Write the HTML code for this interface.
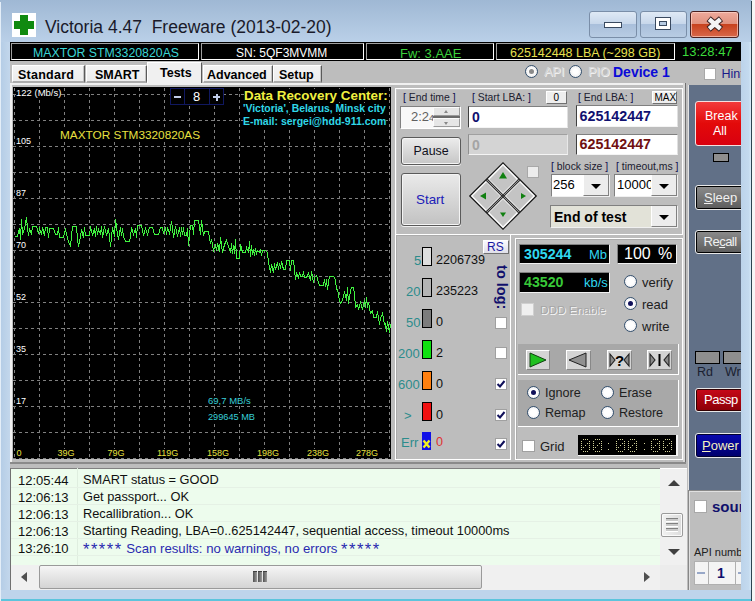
<!DOCTYPE html>
<html><head><meta charset="utf-8">
<style>
*{margin:0;padding:0;box-sizing:border-box}
html,body{width:755px;height:601px;overflow:hidden}
body{position:relative;font-family:"Liberation Sans",sans-serif;background:#bcd3ea;color:#000}
.a{position:absolute}
.t{position:absolute;line-height:1;white-space:nowrap}
.b{font-weight:bold}
.rad{width:13px;height:13px;border-radius:50%;background:radial-gradient(circle at 50% 50%,#fff 40%,#e4e4ea 100%);border:1.5px solid #34506e}
.k{background:#000}
</style></head><body>
<!-- window frame -->
<div class="a" style="left:0;top:0;width:751px;height:42px;background:linear-gradient(#9fb8d4,#bad0e8)"></div>
<!-- icon -->
<div class="a" style="left:12px;top:13px;width:24px;height:24px;background:#fff"></div>
<div class="a" style="left:20px;top:15px;width:8px;height:20px;background:#108a10"></div>
<div class="a" style="left:14px;top:21px;width:20px;height:8px;background:#108a10"></div>
<!-- title -->
<div class="t" id="title" style="left:45px;top:18.5px;font-size:17.5px;color:#1a1a2a">Victoria 4.47&nbsp;&nbsp;Freeware (2013-02-20)</div>
<!-- caption buttons -->
<div class="a" style="left:589px;top:11px;width:48px;height:27px;border:1px solid #7a8ea8;border-radius:3px;background:linear-gradient(#dfe9f5 0,#c6d6ea 50%,#a9bfdb 50%,#b8cce3 100%)"></div>
<div class="a" style="left:604px;top:22px;width:18px;height:6px;background:#fff;border:1px solid #3a4a60"></div>
<div class="a" style="left:640px;top:11px;width:47px;height:27px;border:1px solid #7a8ea8;border-radius:3px;background:linear-gradient(#dfe9f5 0,#c6d6ea 50%,#a9bfdb 50%,#b8cce3 100%)"></div>
<div class="a" style="left:655px;top:17px;width:16px;height:13px;background:#fff;border:1px solid #3a4a60"></div>
<div class="a" style="left:659px;top:21px;width:8px;height:5px;background:#b8cce3;border:1px solid #3a4a60"></div>
<div class="a" style="left:690px;top:11px;width:49px;height:27px;border:1px solid #4a2020;border-radius:3px;background:linear-gradient(#eeaa9c 0,#e0907c 50%,#c8421e 50%,#d8684a 100%);box-shadow:inset 0 0 0 1px rgba(255,220,210,0.6)"></div>
<svg class="a" style="left:704px;top:14px" width="22" height="20" viewBox="0 0 22 20"><path d="M4.6 4.8 L17 15.2 M17 4.8 L4.6 15.2" stroke="#3a2020" stroke-width="6.4" fill="none"/><path d="M5.2 5.3 L16.4 14.7 M16.4 5.3 L5.2 14.7" stroke="#f4f4f4" stroke-width="4.4" fill="none"/></svg>

<!-- client -->
<div class="a" style="left:10px;top:42px;width:731px;height:548px;background:#bdbdbd"></div>
<!-- status bar -->
<div class="a" style="left:10px;top:42px;width:731px;height:19px;background:#000"></div>
<div class="a" style="left:11px;top:43px;width:188px;height:17px;border-top:1px solid #a0a0a0;border-left:1px solid #a0a0a0;border-right:1px solid #fff;border-bottom:1px solid #fff"></div>
<div class="a" style="left:201px;top:43px;width:163px;height:17px;border-top:1px solid #a0a0a0;border-left:1px solid #a0a0a0;border-right:1px solid #fff;border-bottom:1px solid #fff"></div>
<div class="a" style="left:366px;top:43px;width:128px;height:17px;border-top:1px solid #a0a0a0;border-left:1px solid #a0a0a0;border-right:1px solid #fff;border-bottom:1px solid #fff"></div>
<div class="a" style="left:496px;top:43px;width:179px;height:17px;border-top:1px solid #a0a0a0;border-left:1px solid #a0a0a0;border-right:1px solid #fff;border-bottom:1px solid #fff"></div>
<div class="t" id="st1" style="left:33px;top:47px;font-size:12.3px;color:#3cd6d6">MAXTOR STM3320820AS</div>
<div class="t" id="st2" style="left:236px;top:47px;font-size:12px;color:#fff">SN: 5QF3MVMM</div>
<div class="t" id="st3" style="left:400px;top:47px;font-size:13px;color:#3cd23c">Fw: 3.AAE</div>
<div class="t" id="st4" style="left:510px;top:47px;font-size:12.5px;color:#e8e050">625142448 LBA (~298 GB)</div>
<div class="t" id="st5" style="left:682px;top:45px;font-size:13px;color:#3cdc3c">13:28:47</div>

<!-- tabs -->
<div class="a" style="left:12px;top:65px;width:73px;height:18px;background:linear-gradient(#f4f4f4,#ececec);border-right:1px solid #5a5a5a;border-bottom:2px solid #acacac;border-left:1px solid #fff;border-top:1px solid #fff;box-shadow:inset -1px 0 0 #c4c4c4"></div>
<div class="a" style="left:86px;top:65px;width:61px;height:18px;background:linear-gradient(#f4f4f4,#ececec);border-right:1px solid #5a5a5a;border-bottom:2px solid #acacac;border-left:1px solid #fff;border-top:1px solid #fff;box-shadow:inset -1px 0 0 #c4c4c4"></div>
<div class="a" style="left:147px;top:62px;width:55px;height:23px;background:#f0f0f0;border-right:1px solid #5a5a5a;border-left:1px solid #fff;border-top:1px solid #fff"></div>
<div class="a" style="left:203px;top:65px;width:70px;height:18px;background:linear-gradient(#f4f4f4,#ececec);border-right:1px solid #5a5a5a;border-bottom:2px solid #acacac;border-left:1px solid #fff;border-top:1px solid #fff;box-shadow:inset -1px 0 0 #c4c4c4"></div>
<div class="a" style="left:273px;top:65px;width:49px;height:18px;background:linear-gradient(#f4f4f4,#ececec);border-right:1px solid #5a5a5a;border-bottom:2px solid #acacac;border-left:1px solid #fff;border-top:1px solid #fff;box-shadow:inset -1px 0 0 #c4c4c4"></div>
<div class="t b" id="tab1" style="left:18px;top:69px;font-size:12.5px;letter-spacing:0.25px">Standard</div>
<div class="t b" id="tab2" style="left:95px;top:69px;font-size:12.5px">SMART</div>
<div class="t b" id="tab3" style="left:160px;top:67px;font-size:12.5px">Tests</div>
<div class="t b" id="tab4" style="left:207px;top:69px;font-size:12.5px">Advanced</div>
<div class="t b" id="tab5" style="left:279px;top:69px;font-size:12.5px">Setup</div>

<!-- tab page border -->
<div class="a" style="left:10px;top:83px;width:675px;height:2px;background:#f0f0f0"></div>
<div class="a" style="left:10px;top:83px;width:2px;height:380px;background:#f0f0f0"></div>
<div class="a" style="left:683px;top:83px;width:3px;height:381px;background:#d8d8d8;border-right:1px solid #707070"></div>
<div class="a" style="left:10px;top:462px;width:677px;height:2px;background:#8a8a8a"></div>

<!-- chart -->
<div class="a" style="left:13px;top:87px;width:378px;height:372px;background:#000"></div>
<svg class="a" style="left:0;top:0" width="755" height="601">
<g stroke="#808080" stroke-width="1" stroke-dasharray="3 3" shape-rendering="crispEdges">
<line x1="14.5" y1="88" x2="14.5" y2="459"/>
<line x1="39.5" y1="88" x2="39.5" y2="459"/>
<line x1="64.5" y1="88" x2="64.5" y2="459"/>
<line x1="89.5" y1="88" x2="89.5" y2="459"/>
<line x1="114.5" y1="88" x2="114.5" y2="459"/>
<line x1="139.5" y1="88" x2="139.5" y2="459"/>
<line x1="164.5" y1="88" x2="164.5" y2="459"/>
<line x1="189.5" y1="88" x2="189.5" y2="459"/>
<line x1="214.5" y1="88" x2="214.5" y2="459"/>
<line x1="239.5" y1="88" x2="239.5" y2="459"/>
<line x1="264.5" y1="88" x2="264.5" y2="459"/>
<line x1="289.5" y1="88" x2="289.5" y2="459"/>
<line x1="314.5" y1="88" x2="314.5" y2="459"/>
<line x1="339.5" y1="88" x2="339.5" y2="459"/>
<line x1="364.5" y1="88" x2="364.5" y2="459"/>
<line x1="389.5" y1="88" x2="389.5" y2="459"/>
<line x1="13" y1="94.5" x2="391" y2="94.5"/>
<line x1="13" y1="120.5" x2="391" y2="120.5"/>
<line x1="13" y1="146.5" x2="391" y2="146.5"/>
<line x1="13" y1="172.5" x2="391" y2="172.5"/>
<line x1="13" y1="198.5" x2="391" y2="198.5"/>
<line x1="13" y1="224.5" x2="391" y2="224.5"/>
<line x1="13" y1="250.5" x2="391" y2="250.5"/>
<line x1="13" y1="276.5" x2="391" y2="276.5"/>
<line x1="13" y1="302.5" x2="391" y2="302.5"/>
<line x1="13" y1="328.5" x2="391" y2="328.5"/>
<line x1="13" y1="354.5" x2="391" y2="354.5"/>
<line x1="13" y1="380.5" x2="391" y2="380.5"/>
<line x1="13" y1="406.5" x2="391" y2="406.5"/>
<line x1="13" y1="432.5" x2="391" y2="432.5"/>
<line x1="13" y1="458.5" x2="391" y2="458.5"/>
</g>
<polyline fill="none" stroke="#40f440" stroke-width="1" shape-rendering="crispEdges" points="14.5,236.5 17.5,236.5 19.5,228.5 20.5,239.5 21.5,219.5 22.5,234.5 24.5,228.5 26.5,217.5 27.5,228.5 28.5,235.5 29.5,228.5 31.5,234.5 32.5,226.5 36.5,226.5 38.5,233.5 39.5,228.5 41.5,234.5 42.5,227.5 44.5,235.5 45.5,227.5 47.5,227.5 48.5,237.5 49.5,228.5 53.5,228.5 55.5,234.5 57.5,234.5 58.5,227.5 59.5,237.5 63.5,237.5 65.5,228.5 66.5,234.5 68.5,241.5 70.5,246.5 72.5,226.5 76.5,226.5 77.5,239.5 78.5,246.5 80.5,236.5 81.5,229.5 83.5,237.5 84.5,227.5 85.5,235.5 89.5,235.5 90.5,226.5 92.5,235.5 94.5,228.5 95.5,236.5 96.5,226.5 97.5,234.5 98.5,229.5 100.5,234.5 101.5,226.5 102.5,237.5 104.5,226.5 106.5,235.5 108.5,228.5 110.5,246.5 112.5,227.5 114.5,236.5 115.5,219.5 117.5,234.5 118.5,239.5 119.5,233.5 120.5,227.5 121.5,235.5 122.5,228.5 123.5,236.5 125.5,241.5 129.5,241.5 130.5,237.5 131.5,227.5 133.5,234.5 135.5,228.5 136.5,237.5 137.5,225.5 141.5,225.5 143.5,235.5 145.5,228.5 147.5,234.5 149.5,227.5 152.5,227.5 154.5,234.5 158.5,234.5 160.5,227.5 162.5,227.5 163.5,233.5 165.5,227.5 166.5,234.5 167.5,227.5 169.5,233.5 170.5,228.5 171.5,221.5 172.5,228.5 173.5,237.5 175.5,226.5 177.5,236.5 179.5,227.5 180.5,236.5 181.5,227.5 182.5,234.5 183.5,227.5 184.5,235.5 186.5,235.5 187.5,228.5 188.5,245.5 190.5,225.5 192.5,225.5 193.5,234.5 194.5,220.5 198.5,220.5 200.5,234.5 201.5,220.5 203.5,235.5 204.5,231.5 208.5,231.5 210.5,243.5 211.5,239.5 213.5,250.5 215.5,245.5 216.5,250.5 217.5,243.5 219.5,251.5 220.5,237.5 222.5,252.5 224.5,244.5 226.5,240.5 228.5,246.5 230.5,252.5 231.5,243.5 232.5,253.5 233.5,245.5 234.5,253.5 235.5,239.5 236.5,258.5 239.5,258.5 240.5,244.5 242.5,252.5 245.5,252.5 246.5,247.5 248.5,252.5 249.5,241.5 250.5,256.5 251.5,245.5 252.5,254.5 253.5,249.5 254.5,255.5 255.5,248.5 256.5,253.5 257.5,250.5 259.5,252.5 260.5,250.5 261.5,255.5 262.5,250.5 265.5,250.5 267.5,252.5 268.5,262.5 270.5,272.5 271.5,264.5 273.5,272.5 274.5,263.5 275.5,269.5 277.5,262.5 278.5,269.5 279.5,263.5 280.5,268.5 281.5,261.5 283.5,269.5 285.5,269.5 286.5,260.5 289.5,260.5 290.5,270.5 291.5,260.5 293.5,260.5 295.5,279.5 296.5,273.5 298.5,277.5 299.5,272.5 300.5,276.5 302.5,276.5 303.5,271.5 304.5,277.5 306.5,277.5 308.5,273.5 310.5,280.5 311.5,271.5 313.5,282.5 314.5,277.5 316.5,275.5 318.5,282.5 319.5,285.5 323.5,285.5 324.5,279.5 325.5,286.5 326.5,279.5 327.5,289.5 328.5,282.5 329.5,276.5 333.5,276.5 335.5,279.5 336.5,289.5 337.5,289.5 339.5,300.5 340.5,303.5 342.5,300.5 344.5,291.5 346.5,300.5 347.5,287.5 348.5,303.5 350.5,290.5 351.5,287.5 353.5,287.5 354.5,294.5 355.5,307.5 357.5,304.5 358.5,309.5 360.5,302.5 362.5,309.5 364.5,300.5 365.5,307.5 366.5,297.5 367.5,307.5 368.5,302.5 370.5,313.5 372.5,310.5 373.5,317.5 376.5,317.5 377.5,311.5 378.5,317.5 379.5,324.5 380.5,318.5 382.5,313.5 384.5,324.5 385.5,323.5 386.5,331.5 387.5,321.5 389.5,332.5 390.5,324.5"/>
</svg>
<div class="t k" id="c122" style="left:16px;top:88px;font-size:9.5px;color:#fff">122 (Mb/s)</div>
<div class="t k" id="c105" style="left:16px;top:137px;font-size:9px;color:#fff">105</div>
<div class="t k" id="c87" style="left:16px;top:189px;font-size:9px;color:#fff">87</div>
<div class="t k" id="c70" style="left:16px;top:241px;font-size:9px;color:#fff">70</div>
<div class="t k" id="c52" style="left:16px;top:293px;font-size:9px;color:#fff">52</div>
<div class="t k" id="c35" style="left:16px;top:345px;font-size:9px;color:#fff">35</div>
<div class="t k" id="c17" style="left:16px;top:397px;font-size:9px;color:#fff">17</div>
<div class="t k" id="x0" style="left:16.5px;top:449px;font-size:9px;color:#e8e040">0</div>
<div class="t k" id="x39" style="left:57.5px;top:449px;font-size:9px;color:#e8e040">39G</div>
<div class="t k" id="x79" style="left:107.5px;top:449px;font-size:9px;color:#e8e040">79G</div>
<div class="t k" id="x119" style="left:157px;top:449px;font-size:9px;color:#e8e040">119G</div>
<div class="t k" id="x158" style="left:207px;top:449px;font-size:9px;color:#e8e040">158G</div>
<div class="t k" id="x198" style="left:257px;top:449px;font-size:9px;color:#e8e040">198G</div>
<div class="t k" id="x238" style="left:307px;top:449px;font-size:9px;color:#e8e040">238G</div>
<div class="t k" id="x278" style="left:356px;top:449px;font-size:9px;color:#e8e040">278G</div>
<div class="t k" id="cmax" style="left:60px;top:130px;font-size:11.8px;color:#e8e040">MAXTOR STM3320820AS</div>
<div class="t k" id="cspd" style="left:208px;top:396px;font-size:9.5px;color:#38d0d8">69,7 MB/s</div>
<div class="t k" id="cmb" style="left:208px;top:413px;font-size:9.2px;color:#38d0d8">299645 MB</div>
<div class="t b k" id="drc" style="left:244px;top:89px;font-size:13.4px;color:#f0f040">Data Recovery Center:</div>
<div class="t b k" id="drc2" style="left:243px;top:104px;font-size:10.4px;color:#30d8e8">'Victoria', Belarus, Minsk city</div>
<div class="t b k" id="drc3" style="left:243px;top:116px;font-size:10.5px;color:#30d8e8">E-mail: sergei@hdd-911.com</div>
<!-- spinner -->
<div class="a" style="left:170px;top:88px;width:54px;height:17px;background:#000;border:1px solid #101860"></div>
<div class="a" style="left:184px;top:88px;width:1px;height:17px;background:#101860"></div>
<div class="a" style="left:209px;top:88px;width:1px;height:17px;background:#101860"></div>
<div class="a" style="left:174px;top:96px;width:7px;height:2px;background:#c0cce8"></div>
<div class="a" style="left:213px;top:96px;width:7px;height:2px;background:#c0cce8"></div>
<div class="a" style="left:215.5px;top:93.5px;width:2px;height:7px;background:#c0cce8"></div>
<div class="t" id="spin8" style="left:193px;top:90px;font-size:13px;color:#fff">8</div>

<!-- ===== API/PIO row ===== -->
<div class="a rad" style="left:525px;top:65px;background:radial-gradient(#fff 30%,#e4e4e4)"></div>
<div class="a" style="left:529px;top:69px;width:5px;height:5px;border-radius:50%;background:#8a8a8a"></div>
<div class="t" id="api" style="left:544px;top:66px;font-size:12.5px;color:#d8d8d8;text-shadow:1px 1px 0 #f0f0f0">API</div>
<div class="a rad" style="left:569px;top:65px;background:radial-gradient(#fff 30%,#e4e4e4)"></div>
<div class="t" id="pio" style="left:588px;top:66px;font-size:12.5px;color:#d8d8d8;text-shadow:1px 1px 0 #f0f0f0">PIO</div>
<div class="t b" id="dev" style="left:613px;top:65px;font-size:14px;color:#0a0ad8">Device 1</div>
<div class="a" style="left:704px;top:68px;width:12px;height:12px;background:#fff;border:1px solid #a8a8a8"></div>
<div class="t" id="hint" style="left:721.5px;top:67.5px;font-size:12.5px;color:#1a1a8a">Hint</div>

<!-- ===== sidebar ===== -->
<div class="a" style="left:686px;top:85px;width:3px;height:405px;background:#bdbdbd;border-right:1px solid #e4e4e4"></div>
<div class="a" style="left:689px;top:85px;width:52px;height:405px;background:#617087"></div>
<div class="a" style="left:695px;top:101px;width:50px;height:45px;border:1px solid #f4e0e0;border-radius:3px;background:linear-gradient(#f23a3a,#e30a0a 50%,#d80010)"></div>
<div class="t" id="brk1" style="left:705px;top:110px;font-size:12.5px;color:#fff">Break</div>
<div class="t" id="brk2" style="left:713px;top:125px;font-size:12.5px;color:#fff">All</div>
<div class="a" style="left:713px;top:153px;width:16px;height:9px;background:#8e8e8e;border:1px solid #000"></div>
<div class="a" style="left:695px;top:185px;width:50px;height:25px;border:1px solid #e8e8e8;border-radius:3px;background:linear-gradient(#8c8c8c,#5c5c5c);box-shadow:inset 0 0 0 1px #000"></div>
<div class="t" id="slp" style="left:704px;top:191px;font-size:13px;color:#f0f0f0"><u>S</u>leep</div>
<div class="a" style="left:695px;top:230px;width:50px;height:24px;border:1px solid #e8e8e8;border-radius:3px;background:linear-gradient(#8c8c8c,#5c5c5c);box-shadow:inset 0 0 0 1px #000"></div>
<div class="t" id="rcl" style="left:703.5px;top:235px;font-size:13px;color:#f0f0f0;letter-spacing:-0.5px">Re<u>c</u>all</div>
<div class="a" style="left:695px;top:351px;width:25px;height:13px;background:#8e8e8e;border:1px solid #000"></div>
<div class="a" style="left:723px;top:351px;width:25px;height:13px;background:#8e8e8e;border:1px solid #000"></div>
<div class="t" id="rd" style="left:697px;top:366px;font-size:12.5px;color:#1a2030">Rd</div>
<div class="t" id="wr" style="left:725px;top:366px;font-size:12.5px;color:#1a2030">Wr</div>
<div class="a" style="left:695px;top:388px;width:50px;height:24px;border:1px solid #e8e8e8;border-radius:3px;background:linear-gradient(#c80818,#8a0008);box-shadow:inset 0 0 0 1px #300"></div>
<div class="t" id="psp" style="left:704px;top:393px;font-size:13px;color:#fff;letter-spacing:-0.5px">Passp</div>
<div class="a" style="left:695px;top:433px;width:50px;height:25px;border:1px solid #e8e8e8;border-radius:3px;background:linear-gradient(#0808b0,#00006a);box-shadow:inset 0 0 0 1px #000030"></div>
<div class="t" id="pwr" style="left:702px;top:439px;font-size:13px;color:#f4f0c0"><u>P</u>ower</div>
<!-- lower sidebar panel -->
<div class="a" style="left:688px;top:490px;width:53px;height:101px;background:#bebebe;border-top:1px solid #888;border-left:1px solid #888;border-bottom:1px solid #f4f4f4"></div>
<div class="a" style="left:689px;top:491px;width:52px;height:99px;border-top:1px solid #e0e0e0;border-left:1px solid #e0e0e0"></div>
<div class="a" style="left:694px;top:500px;width:13px;height:13px;background:#fff;border:1px solid #a8a8a8"></div>
<div class="t b" id="snd" style="left:712px;top:499px;font-size:15px;color:#10106c">sound</div>
<div class="t" id="apin" style="left:694px;top:547px;font-size:11px;color:#202020">API number</div>
<div class="a" style="left:694px;top:561px;width:60px;height:24px;background:#f4f4f4;border:1px solid #b0b0b0"></div>
<div class="a" style="left:708px;top:561px;width:1px;height:24px;background:#b0b0b0"></div>
<div class="a" style="left:735px;top:561px;width:1px;height:24px;background:#b0b0b0"></div>
<div class="a" style="left:697px;top:572px;width:8px;height:2px;background:#98a8c8"></div>
<div class="a" style="left:738px;top:572px;width:3px;height:2px;background:#98a8c8"></div>
<div class="t b" id="api1" style="left:717px;top:566px;font-size:14px;color:#10106c">1</div>

<!-- ===== log ===== -->
<div class="a" style="left:10px;top:468px;width:650px;height:97px;background:#edfced;border-top:1px solid #808080;border-left:1px solid #707070"></div>
<div class="a" style="left:77px;top:468px;width:1px;height:97px;background:#dfeedf"></div>
<div class="a" style="left:11px;top:487px;width:649px;height:1px;background:#e5f1e5"></div>
<div class="a" style="left:11px;top:504px;width:649px;height:1px;background:#e5f1e5"></div>
<div class="a" style="left:11px;top:521px;width:649px;height:1px;background:#e5f1e5"></div>
<div class="a" style="left:11px;top:538px;width:649px;height:1px;background:#e5f1e5"></div>
<div class="a" style="left:11px;top:555px;width:649px;height:1px;background:#e5f1e5"></div>
<div class="t" id="lt1" style="left:18px;top:474px;font-size:13px;color:#101010">12:05:44</div>
<div class="t" id="lt2" style="left:18px;top:491px;font-size:13px;color:#101010">12:06:13</div>
<div class="t" id="lt3" style="left:18px;top:508px;font-size:13px;color:#101010">12:06:13</div>
<div class="t" id="lt4" style="left:18px;top:525px;font-size:13px;color:#101010">12:06:13</div>
<div class="t" id="lt5" style="left:18px;top:542px;font-size:13px;color:#101010">13:26:10</div>
<div class="t" id="lm1" style="left:83px;top:474px;font-size:12.8px;color:#101010">SMART status = GOOD</div>
<div class="t" id="lm2" style="left:83px;top:491px;font-size:12.8px;color:#101010">Get passport... OK</div>
<div class="t" id="lm3" style="left:83px;top:508px;font-size:12.8px;color:#101010">Recallibration... OK</div>
<div class="t" id="lm4" style="left:83px;top:525px;font-size:12.8px;color:#101010">Starting Reading, LBA=0..625142447, sequential access, timeout 10000ms</div>
<div class="t" id="lm5" style="left:83px;top:542px;font-size:13.2px;color:#2a2ab0"><span style="letter-spacing:1.5px;font-size:16.5px;position:relative;top:2px;line-height:0">*****</span> Scan results: no warnings, no errors <span style="letter-spacing:1.5px;font-size:16.5px;position:relative;top:2px;line-height:0">*****</span></div>
<!-- vertical scrollbar -->
<div class="a" style="left:660px;top:468px;width:27px;height:97px;background:#f0f0f0;border-top:1px solid #fff"></div>
<div class="a" style="left:668px;top:480px;width:0;height:0;border-left:6px solid transparent;border-right:6px solid transparent;border-bottom:6px solid #404040"></div>
<div class="a" style="left:661px;top:513px;width:22px;height:24px;border:1px solid #9a9a9a;border-radius:2px;background:linear-gradient(90deg,#f2f2f2,#dcdcdc);box-shadow:inset 0 0 0 1px #fafafa"></div>
<div class="a" style="left:666px;top:518px;width:12px;height:4px;background:#c8c8c8;border-top:1px solid #808080;border-bottom:1px solid #fff"></div>
<div class="a" style="left:666px;top:523px;width:12px;height:4px;background:#c8c8c8;border-top:1px solid #808080;border-bottom:1px solid #fff"></div>
<div class="a" style="left:666px;top:528px;width:12px;height:4px;background:#c8c8c8;border-top:1px solid #808080;border-bottom:1px solid #fff"></div>
<div class="a" style="left:668px;top:549px;width:0;height:0;border-left:6px solid transparent;border-right:6px solid transparent;border-top:6px solid #404040"></div>
<!-- horizontal scrollbar -->
<div class="a" style="left:10px;top:565px;width:677px;height:26px;background:#f0f0f0;border-left:1px solid #707070"></div>
<div class="a" style="left:21px;top:572px;width:0;height:0;border-top:5.5px solid transparent;border-bottom:5.5px solid transparent;border-right:6px solid #505050"></div>
<div class="a" style="left:39px;top:565px;width:443px;height:24px;border:1px solid #9a9a9a;border-radius:2px;background:linear-gradient(#f6f6f6,#e8e8e8 40%,#d4d4d4)"></div>
<div class="a" style="left:253px;top:571px;width:4px;height:11px;background:linear-gradient(90deg,#505050,#9a9a9a);border-top:1px solid #404040"></div>
<div class="a" style="left:258px;top:571px;width:4px;height:11px;background:linear-gradient(90deg,#505050,#9a9a9a);border-top:1px solid #404040"></div>
<div class="a" style="left:263px;top:571px;width:4px;height:11px;background:linear-gradient(90deg,#505050,#9a9a9a);border-top:1px solid #404040"></div>
<div class="a" style="left:644px;top:572px;width:0;height:0;border-top:5.5px solid transparent;border-bottom:5.5px solid transparent;border-left:6px solid #505050"></div>
<div class="a" style="left:660px;top:565px;width:27px;height:26px;background:#ececec"></div>
<!-- ===== top-right panel ===== -->
<div class="a" style="left:395px;top:88px;width:288px;height:147px;border:1px solid #fff"></div>
<div class="a" style="left:396px;top:89px;width:286px;height:145px;border-top:1px solid #c8c8c8;border-left:1px solid #c8c8c8"></div>
<div class="t" id="lend" style="left:403px;top:93px;font-size:10.4px;color:#202030"><span style="color:#101050">[</span> End time <span style="color:#101050">]</span></div>
<div class="t" id="lstart" style="left:472px;top:93px;font-size:10.4px;color:#202030"><span style="color:#101050">[</span> Start LBA: <span style="color:#101050">]</span></div>
<div class="t" id="lendlba" style="left:578px;top:93px;font-size:10.4px;color:#202030"><span style="color:#101050">[</span> End LBA: <span style="color:#101050">]</span></div>
<div class="a" style="left:546px;top:91px;width:21px;height:13px;background:#eeeeee;border-top:1px solid #fff;border-left:1px solid #fff;border-right:1px solid #707070;border-bottom:1px solid #707070"></div>
<div class="t" id="b0" style="left:553.5px;top:93px;font-size:10px;color:#000">0</div>
<div class="a" style="left:652px;top:91px;width:25px;height:13px;background:#eeeeee;border-top:1px solid #fff;border-left:1px solid #fff;border-right:1px solid #707070;border-bottom:1px solid #707070"></div>
<div class="t" id="bmax" style="left:654.5px;top:93px;font-size:10px;color:#000">MAX</div>
<!-- end time field -->
<div class="a" style="left:400px;top:106px;width:61px;height:23px;background:#f8f8f8;border-top:1px solid #808080;border-left:1px solid #808080;border-right:1px solid #fff;border-bottom:1px solid #fff"></div>
<div class="t" id="etime" style="left:411px;top:110px;font-size:13px;color:#606060">2:2<span style="font-size:9px">4</span></div>
<div class="a" style="left:433px;top:107px;width:27px;height:9px;background:#e6e6e6;border-top:1px solid #fbfbfb;border-left:1px solid #fbfbfb;border-bottom:1px solid #9a9a9a;border-right:1px solid #9a9a9a"></div>
<div class="a" style="left:433px;top:116px;width:27px;height:2px;background:#6a6a6a"></div>
<div class="a" style="left:433px;top:118px;width:27px;height:9px;background:#e6e6e6;border-top:1px solid #fbfbfb;border-left:1px solid #fbfbfb;border-bottom:1px solid #9a9a9a;border-right:1px solid #9a9a9a"></div>
<div class="a" style="left:444px;top:110px;width:0;height:0;border-left:2.5px solid transparent;border-right:2.5px solid transparent;border-bottom:3px solid #888"></div>
<div class="a" style="left:444px;top:122px;width:0;height:0;border-left:2.5px solid transparent;border-right:2.5px solid transparent;border-top:3px solid #888"></div>
<!-- start lba -->
<div class="a" style="left:468px;top:106px;width:100px;height:22px;background:#fff;border-top:1px solid #808080;border-left:1px solid #404040;border-right:1px solid #e0e0e0;border-bottom:1px solid #f4f4f4"></div>
<div class="t b" id="slba" style="left:472px;top:110px;font-size:14px;color:#101070">0</div>
<div class="a" style="left:468px;top:134px;width:100px;height:21px;background:#d4d4d4;border-top:1px solid #a0a0a0;border-left:1px solid #909090;border-right:1px solid #e8e8e8;border-bottom:1px solid #f4f4f4"></div>
<div class="t b" id="slba2" style="left:472px;top:138px;font-size:14px;color:#a4a4a4">0</div>
<!-- end lba -->
<div class="a" style="left:576px;top:105px;width:102px;height:22px;background:#fff;border-top:1px solid #808080;border-left:1px solid #404040;border-right:1px solid #e0e0e0;border-bottom:1px solid #f4f4f4"></div>
<div class="t b" id="elba" style="left:579.5px;top:108.5px;font-size:14.3px;color:#101070">625142447</div>
<div class="a" style="left:576px;top:134px;width:102px;height:21px;background:#fff;border-top:1px solid #808080;border-left:1px solid #404040;border-right:1px solid #e0e0e0;border-bottom:1px solid #f4f4f4"></div>
<div class="t b" id="elba2" style="left:579.5px;top:137px;font-size:14.3px;color:#701010">625142447</div>
<!-- pause / start -->
<div class="a" style="left:401px;top:137px;width:60px;height:28px;border:1px solid #5a5a5a;border-radius:3px;background:linear-gradient(#ececec,#c6c6c6);box-shadow:inset 0 0 0 1px #f4f4f4,0 1px 0 #f0f0f0"></div>
<div class="t" id="pause" style="left:413.5px;top:144.5px;font-size:12.4px;color:#101020">Pause</div>
<div class="a" style="left:401px;top:173px;width:60px;height:53px;border:1px solid #5a5a5a;border-radius:3px;background:linear-gradient(#eaeaea,#c2c2c2);box-shadow:inset 0 0 0 1px #f4f4f4,0 1px 0 #f0f0f0"></div>
<div class="t" id="startb" style="left:416px;top:193px;font-size:13.4px;color:#2020b8">Start</div>
<!-- diamond -->
<svg class="a" style="left:466px;top:159px" width="74" height="74" viewBox="0 0 74 74">
<g transform="translate(37 37) rotate(45)">
<rect x="-23.5" y="-23.5" width="47" height="47" fill="#c0c0c0" stroke="#101010" stroke-width="1.2"/>
<rect x="-22" y="-22" width="20.5" height="20.5" fill="#c4c4c4" stroke="#fff" stroke-width="1.2"/>
<rect x="1.5" y="-22" width="20.5" height="20.5" fill="#c4c4c4" stroke="#fff" stroke-width="1.2"/>
<rect x="-22" y="1.5" width="20.5" height="20.5" fill="#c4c4c4" stroke="#fff" stroke-width="1.2"/>
<rect x="1.5" y="1.5" width="20.5" height="20.5" fill="#c4c4c4" stroke="#fff" stroke-width="1.2"/>
<path d="M-23 -0.8 H23 M-23 0.8 H23 M-0.8 -23 V23 M0.8 -23 V23" stroke="#202020" stroke-width="1"/>
</g>
<path d="M37 13 L41 19.5 L33 19.5 Z" fill="#108010"/>
<path d="M37 58 L34 53.5 L40 53.5 Z" fill="#108010"/>
<path d="M14 37 L20 33.5 L20 40.5 Z" fill="#108010"/>
<path d="M60 37 L55 34 L55 40 Z" fill="#108010"/>
</svg>
<div class="a" style="left:527px;top:166px;width:12px;height:12px;background:#ececec;border:1px solid #a8a8a8"></div>
<!-- block size / timeout -->
<div class="t" id="lblk" style="left:551px;top:162px;font-size:10.4px;color:#202030"><span style="color:#101050">[</span> block size <span style="color:#101050">]</span></div>
<div class="t" id="ltmo" style="left:616px;top:162px;font-size:10.4px;color:#202030"><span style="color:#101050">[</span> timeout,ms <span style="color:#101050">]</span></div>
<div class="a" style="left:551px;top:174px;width:59px;height:23px;background:#fff;border-top:1px solid #808080;border-left:1px solid #808080;border-right:1px solid #f0f0f0;border-bottom:1px solid #f0f0f0"></div>
<div class="a" style="left:583px;top:175px;width:26px;height:21px;background:#ececec;border-right:1px solid #808080;border-bottom:1px solid #808080;border-left:1px solid #fff"></div>
<div class="a" style="left:591px;top:184px;width:0;height:0;border-left:5px solid transparent;border-right:5px solid transparent;border-top:5px solid #000"></div>
<div class="t" id="blk" style="left:553px;top:178px;font-size:13px;color:#000">256</div>
<div class="a" style="left:614px;top:174px;width:64px;height:23px;background:#fff;border-top:1px solid #808080;border-left:1px solid #808080;border-right:1px solid #f0f0f0;border-bottom:1px solid #f0f0f0"></div>
<div class="t" id="tmo" style="left:617px;top:178px;font-size:13px;color:#000">10000</div>
<div class="a" style="left:651px;top:175px;width:26px;height:21px;background:#ececec;border-right:1px solid #808080;border-bottom:1px solid #808080;border-left:1px solid #fff"></div>
<div class="a" style="left:659px;top:184px;width:0;height:0;border-left:5px solid transparent;border-right:5px solid transparent;border-top:5px solid #000"></div>
<!-- end of test -->
<div class="a" style="left:550px;top:205px;width:128px;height:23px;background:#e2e2d8;border-top:1px solid #808080;border-left:1px solid #808080;border-right:1px solid #f0f0f0;border-bottom:1px solid #f0f0f0"></div>
<div class="t b" id="eot" style="left:554px;top:210px;font-size:14px;color:#000">End of test</div>
<div class="a" style="left:651px;top:206px;width:26px;height:21px;background:#ececec;border-right:1px solid #808080;border-bottom:1px solid #808080;border-left:1px solid #fff"></div>
<div class="a" style="left:659px;top:215px;width:0;height:0;border-left:5px solid transparent;border-right:5px solid transparent;border-top:5px solid #000"></div>

<!-- ===== legend panel ===== -->
<div class="a" style="left:395px;top:234px;width:116px;height:226px;border:1px solid #fff"></div>
<div class="a" style="left:396px;top:235px;width:114px;height:224px;border-top:1px solid #ababab;border-left:1px solid #ababab"></div>
<div class="a" style="left:483px;top:240px;width:26px;height:14px;background:linear-gradient(#fafaff,#e0e0ea);border-top:1px solid #fff;border-left:1px solid #fff;border-right:1px solid #707070;border-bottom:1px solid #707070"></div>
<div class="t" id="rs" style="left:487px;top:241px;font-size:12px;color:#1818a0">RS</div>
<div class="a" style="left:422px;top:247px;width:10px;height:19px;background:#dedede;border:1px solid #000"></div>
<div class="a" style="left:422px;top:278px;width:10px;height:19px;background:#b4b4b4;border:1px solid #000"></div>
<div class="a" style="left:422px;top:309px;width:10px;height:19px;background:#7c7c7c;border:1px solid #000"></div>
<div class="a" style="left:422px;top:340px;width:10px;height:19px;background:#10e010;border:1px solid #000"></div>
<div class="a" style="left:422px;top:371px;width:10px;height:19px;background:#ff8010;border:1px solid #000"></div>
<div class="a" style="left:422px;top:402px;width:10px;height:19px;background:#f01010;border:1px solid #000"></div>
<div class="a" style="left:422px;top:432px;width:9px;height:18px;background:#1010e8"></div>
<svg class="a" style="left:422px;top:432px" width="9" height="18"><path d="M1.5 8.5 L7.5 15.5 M7.5 8.5 L1.5 15.5" stroke="#f0f020" stroke-width="2.4" fill="none"/></svg>
<div class="t" id="l5" style="left:414px;top:254px;font-size:13px;color:#2c8c8c">5</div>
<div class="t" id="l20" style="left:406px;top:285px;font-size:13px;color:#2c8c8c">20</div>
<div class="t" id="l50" style="left:406px;top:316px;font-size:13px;color:#2c8c8c">50</div>
<div class="t" id="l200" style="left:398px;top:347px;font-size:13px;color:#2c8c8c">200</div>
<div class="t" id="l600" style="left:398px;top:378px;font-size:13px;color:#2c8c8c">600</div>
<div class="t" id="lgt" style="left:404px;top:409px;font-size:13px;color:#2c8c8c">&gt;</div>
<div class="t" id="lerr" style="left:401px;top:436px;font-size:13px;color:#2c8c8c">Err</div>
<div class="t" id="v5" style="left:436px;top:254px;font-size:12.6px;color:#101010">2206739</div>
<div class="t" id="v20" style="left:436px;top:285px;font-size:12.6px;color:#101010">235223</div>
<div class="t" id="v50" style="left:436px;top:316px;font-size:12.6px;color:#101010">0</div>
<div class="t" id="v200" style="left:436px;top:347px;font-size:12.6px;color:#101010">2</div>
<div class="t" id="v600" style="left:436px;top:378px;font-size:12.6px;color:#101010">0</div>
<div class="t" id="vgt" style="left:436px;top:409px;font-size:12.6px;color:#101010">0</div>
<div class="t" id="verr" style="left:436px;top:436px;font-size:12.6px;color:#e03030">0</div>
<div class="t b" id="tolog" style="left:480px;top:280px;font-size:14.5px;color:#10106c;transform:rotate(90deg);transform-origin:center">to log:</div>
<div class="a" style="left:495px;top:317px;width:12px;height:12px;background:#fff;border:1px solid #a0a0a0"></div>
<div class="a" style="left:495px;top:347px;width:12px;height:12px;background:#fff;border:1px solid #a0a0a0"></div>
<div class="a" style="left:495px;top:378px;width:12px;height:12px;background:#fff;border:1px solid #a0a0a0"></div>
<div class="a" style="left:495px;top:409px;width:12px;height:12px;background:#fff;border:1px solid #a0a0a0"></div>
<div class="a" style="left:495px;top:438px;width:12px;height:12px;background:#fff;border:1px solid #a0a0a0"></div>
<svg class="a" style="left:495px;top:378px" width="12" height="12"><path d="M2.5 6 L5 8.5 L9.5 3" stroke="#10105a" stroke-width="2" fill="none"/></svg>
<svg class="a" style="left:495px;top:409px" width="12" height="12"><path d="M2.5 6 L5 8.5 L9.5 3" stroke="#10105a" stroke-width="2" fill="none"/></svg>
<svg class="a" style="left:495px;top:438px" width="12" height="12"><path d="M2.5 6 L5 8.5 L9.5 3" stroke="#10105a" stroke-width="2" fill="none"/></svg>

<!-- ===== right-middle panel ===== -->
<div class="a" style="left:515px;top:238px;width:168px;height:222px;border:1px solid #fff"></div>
<div class="a" style="left:516px;top:239px;width:166px;height:220px;border-top:1px solid #ababab;border-left:1px solid #ababab"></div>
<div class="a" style="left:519px;top:244px;width:91px;height:20px;background:#000;border-top:1px solid #808080;border-left:1px solid #808080;border-right:1px solid #f0f0f0;border-bottom:1px solid #f0f0f0"></div>
<div class="t b" id="mb" style="left:524px;top:247px;font-size:14.2px;color:#30d8f0">305244</div>
<div class="t" id="mbu" style="left:589px;top:248px;font-size:13px;color:#30d8f0">Mb</div>
<div class="a" style="left:617px;top:244px;width:60px;height:20px;background:#000;border-top:1px solid #808080;border-left:1px solid #808080;border-right:1px solid #f0f0f0;border-bottom:1px solid #f0f0f0"></div>
<div class="t" id="pct" style="left:624px;top:246px;font-size:16px;color:#fff">100</div>
<div class="t" id="pctu" style="left:658px;top:246px;font-size:16px;color:#fff">%</div>
<div class="a" style="left:519px;top:272px;width:91px;height:21px;background:#000;border-top:1px solid #808080;border-left:1px solid #808080;border-right:1px solid #f0f0f0;border-bottom:1px solid #f0f0f0"></div>
<div class="t b" id="kb" style="left:524px;top:275px;font-size:14.2px;color:#38c838">43520</div>
<div class="t" id="kbu" style="left:584px;top:276px;font-size:13px;color:#30d8f0">kb/s</div>
<!-- DDD -->
<div class="a" style="left:521px;top:303px;width:13px;height:13px;background:#f0f0f0;border:1px solid #d0d0d0"></div>
<div class="t" id="ddd" style="left:540px;top:305px;font-size:11.8px;color:#a6a6a6;text-shadow:1px 1px 0 #f6f6f6">DDD Enable</div>
<!-- radios verify/read/write -->
<div class="a rad" style="left:624px;top:275px"></div>
<div class="a rad" style="left:624px;top:297px"></div>
<div class="a rad" style="left:624px;top:319px"></div>
<div class="a" style="left:628px;top:301px;width:5px;height:5px;border-radius:50%;background:#10105a"></div>
<div class="t" id="rver" style="left:642px;top:276px;font-size:13px;color:#202020">verify</div>
<div class="t" id="rrd" style="left:642px;top:298px;font-size:13px;color:#202020">read</div>
<div class="t" id="rwr" style="left:642px;top:320px;font-size:13px;color:#202020">write</div>
<!-- player toolbar -->
<div class="a" style="left:518px;top:344px;width:161px;height:31px;background:#a8a8a8;border-right:1px solid #fff;border-bottom:1px solid #fff"></div>
<div class="a" style="left:526px;top:350px;width:24px;height:20px;background:#d4d4d4;border-top:1px solid #fff;border-left:1px solid #fff;border-right:1px solid #888;border-bottom:1px solid #888"></div>
<svg class="a" style="left:526px;top:350px" width="24" height="20"><path d="M4 3 L20 10 L4 17 Z" fill="#20c020" stroke="#104010" stroke-width="1"/></svg>
<div class="a" style="left:566px;top:350px;width:25px;height:20px;background:#d4d4d4;border-top:1px solid #fff;border-left:1px solid #fff;border-right:1px solid #888;border-bottom:1px solid #888"></div>
<svg class="a" style="left:566px;top:350px" width="25" height="20"><path d="M3 10 L20 3 L20 17 Z" fill="#909090" stroke="#202020" stroke-width="1"/></svg>
<div class="a" style="left:607px;top:350px;width:25px;height:20px;background:#d4d4d4;border-top:1px solid #fff;border-left:1px solid #fff;border-right:1px solid #888;border-bottom:1px solid #888"></div>
<svg class="a" style="left:607px;top:350px" width="25" height="20"><path d="M3 4 L8 10 L3 16 Z M22 4 L17 10 L22 16 Z" fill="#8a8a8a" stroke="#202020" stroke-width="1.1"/><text x="12.5" y="15.5" font-family="Liberation Sans" font-weight="bold" font-size="15" text-anchor="middle" fill="#000">?</text></svg>
<div class="a" style="left:647px;top:350px;width:25px;height:20px;background:#d4d4d4;border-top:1px solid #fff;border-left:1px solid #fff;border-right:1px solid #888;border-bottom:1px solid #888"></div>
<svg class="a" style="left:647px;top:350px" width="25" height="20"><path d="M3 4 L8 10 L3 16 Z M22 4 L17 10 L22 16 Z" fill="#8a8a8a" stroke="#202020" stroke-width="1.1"/><rect x="11.5" y="4" width="2" height="12" fill="#000"/></svg>
<!-- options -->
<div class="a" style="left:518px;top:380px;width:161px;height:47px;background:#a8a8a8;border-right:1px solid #fff;border-bottom:1px solid #fff"></div>
<div class="a rad" style="left:527px;top:386px"></div>
<div class="a rad" style="left:601px;top:386px"></div>
<div class="a rad" style="left:527px;top:406px"></div>
<div class="a rad" style="left:601px;top:406px"></div>
<div class="a" style="left:531px;top:390px;width:5px;height:5px;border-radius:50%;background:#10105a"></div>
<div class="t" id="oign" style="left:545px;top:387px;font-size:12.6px;color:#202020">Ignore</div>
<div class="t" id="oers" style="left:619px;top:387px;font-size:12.6px;color:#202020">Erase</div>
<div class="t" id="orem" style="left:545px;top:407px;font-size:12.6px;color:#202020">Remap</div>
<div class="t" id="orst" style="left:619px;top:407px;font-size:12.6px;color:#202020">Restore</div>
<!-- grid + timer -->
<div class="a" style="left:522px;top:440px;width:13px;height:12px;background:#fff;border:1px solid #a0a0a0"></div>
<div class="t" id="grid" style="left:540px;top:440px;font-size:13px;color:#202020">Grid</div>
<div class="a" style="left:578px;top:435px;width:100px;height:21px;background:#000;border-right:2px solid #f4f4f4;border-bottom:1px solid #f4f4f4"></div>
<svg class="a" style="left:0;top:0" width="755" height="601"><path fill="#d0d098" d="M583 439h1v1h-1zM585 439h1v1h-1zM587 439h1v1h-1zM581 441h1v1h-1zM589 441h1v1h-1zM581 443h1v1h-1zM587 443h1v1h-1zM589 443h1v1h-1zM581 445h1v1h-1zM585 445h1v1h-1zM589 445h1v1h-1zM581 447h1v1h-1zM583 447h1v1h-1zM589 447h1v1h-1zM581 449h1v1h-1zM589 449h1v1h-1zM583 451h1v1h-1zM585 451h1v1h-1zM587 451h1v1h-1zM595 439h1v1h-1zM597 439h1v1h-1zM599 439h1v1h-1zM593 441h1v1h-1zM601 441h1v1h-1zM593 443h1v1h-1zM599 443h1v1h-1zM601 443h1v1h-1zM593 445h1v1h-1zM597 445h1v1h-1zM601 445h1v1h-1zM593 447h1v1h-1zM595 447h1v1h-1zM601 447h1v1h-1zM593 449h1v1h-1zM601 449h1v1h-1zM595 451h1v1h-1zM597 451h1v1h-1zM599 451h1v1h-1zM618 439h1v1h-1zM620 439h1v1h-1zM622 439h1v1h-1zM616 441h1v1h-1zM624 441h1v1h-1zM616 443h1v1h-1zM622 443h1v1h-1zM624 443h1v1h-1zM616 445h1v1h-1zM620 445h1v1h-1zM624 445h1v1h-1zM616 447h1v1h-1zM618 447h1v1h-1zM624 447h1v1h-1zM616 449h1v1h-1zM624 449h1v1h-1zM618 451h1v1h-1zM620 451h1v1h-1zM622 451h1v1h-1zM630 439h1v1h-1zM632 439h1v1h-1zM634 439h1v1h-1zM628 441h1v1h-1zM636 441h1v1h-1zM628 443h1v1h-1zM634 443h1v1h-1zM636 443h1v1h-1zM628 445h1v1h-1zM632 445h1v1h-1zM636 445h1v1h-1zM628 447h1v1h-1zM630 447h1v1h-1zM636 447h1v1h-1zM628 449h1v1h-1zM636 449h1v1h-1zM630 451h1v1h-1zM632 451h1v1h-1zM634 451h1v1h-1zM653 439h1v1h-1zM655 439h1v1h-1zM657 439h1v1h-1zM651 441h1v1h-1zM659 441h1v1h-1zM651 443h1v1h-1zM657 443h1v1h-1zM659 443h1v1h-1zM651 445h1v1h-1zM655 445h1v1h-1zM659 445h1v1h-1zM651 447h1v1h-1zM653 447h1v1h-1zM659 447h1v1h-1zM651 449h1v1h-1zM659 449h1v1h-1zM653 451h1v1h-1zM655 451h1v1h-1zM657 451h1v1h-1zM665 439h1v1h-1zM667 439h1v1h-1zM669 439h1v1h-1zM663 441h1v1h-1zM671 441h1v1h-1zM663 443h1v1h-1zM669 443h1v1h-1zM671 443h1v1h-1zM663 445h1v1h-1zM667 445h1v1h-1zM671 445h1v1h-1zM663 447h1v1h-1zM665 447h1v1h-1zM671 447h1v1h-1zM663 449h1v1h-1zM671 449h1v1h-1zM665 451h1v1h-1zM667 451h1v1h-1zM669 451h1v1h-1zM608 443h1v1h-1zM608 449h1v1h-1zM644 443h1v1h-1zM644 449h1v1h-1z"/></svg>

<!-- frame on top -->
<div class="a" style="left:0;top:42px;width:10px;height:559px;background:linear-gradient(90deg,#eaf2fa 0,#eaf2fa 1px,#b5cde6 1px,#c3d7ec 10px)"></div>
<div class="a" style="left:741px;top:42px;width:10px;height:559px;background:linear-gradient(90deg,#bcd3ea,#c4daef 80%,#d8ecf8)"></div>
<div class="a" style="left:0;top:590px;width:755px;height:11px;background:#bed4eb"></div>
<div class="a" style="left:0;top:599px;width:755px;height:2px;background:#5cc4dc"></div>
<div class="a" style="left:751px;top:1px;width:1px;height:600px;background:#2c4450"></div>
<div class="a" style="left:0;top:2px;width:1px;height:599px;background:#e4eef8"></div>
<div class="a" style="left:752px;top:0;width:3px;height:601px;background:#f6f6f6"></div>
</body></html>
